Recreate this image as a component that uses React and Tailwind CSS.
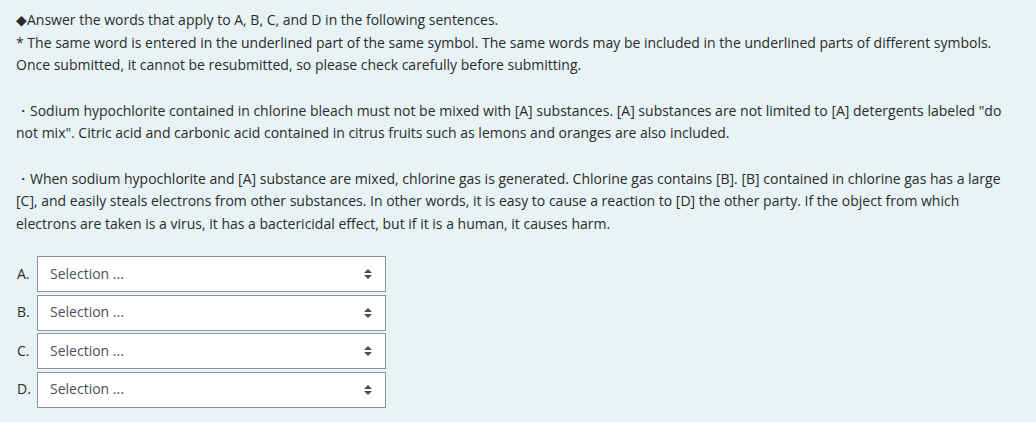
import React from 'react'

const rows = ['A', 'B', 'C', 'D']

function Arrows() {
  return (
    <svg width="8" height="10" viewBox="0 0 8 10" className="shrink-0">
      <path d="M4 0 L8 4 L0 4 Z" fill="#495057" />
      <path d="M4 10 L8 6 L0 6 Z" fill="#495057" />
    </svg>
  )
}

export default function App() {
  return (
    <div
      className="w-[1036px] h-[422px] bg-[#e7f3f5] text-[#2b2b2b] text-[14px] leading-[22.5px] pl-[16px] pr-[14px] pt-[9px]"
      style={{ fontFamily: '"Open Sans", "Liberation Sans", sans-serif' }}
    >
      <p>◆Answer the words that apply to A, B, C, and D in the following sentences.</p>
      <p>* The same word is entered in the underlined part of the same symbol. The same words may be included in the underlined parts of different symbols.</p>
      <p>Once submitted, it cannot be resubmitted, so please check carefully before submitting.</p>

      <p className="mt-[23px]">
        ・Sodium hypochlorite contained in chlorine bleach must not be mixed with [A] substances. [A] substances are not limited to [A] detergents labeled "do not mix". Citric acid and carbonic acid contained in citrus fruits such as lemons and oranges are also included.
      </p>

      <p className="mt-[23px]">
        ・When sodium hypochlorite and [A] substance are mixed, chlorine gas is generated. Chlorine gas contains [B]. [B] contained in chlorine gas has a large [C], and easily steals electrons from other substances. In other words, it is easy to cause a reaction to [D] the other party. If the object from which electrons are taken is a virus, it has a bactericidal effect, but if it is a human, it causes harm.
      </p>

      <div className="mt-[21px] flex flex-col gap-[2.5px]">
        {rows.map(r => (
          <div key={r} className="flex items-center h-[36px]">
            <span className="w-[21px] pl-[1px]">{r}.</span>
            <div className="w-[349px] h-[36px] bg-white border border-[#8f959e] flex items-center justify-between pl-[12px] pr-[13px] text-[#495057]">
              <span>Selection ...</span>
              <Arrows />
            </div>
          </div>
        ))}
      </div>
    </div>
  )
}
